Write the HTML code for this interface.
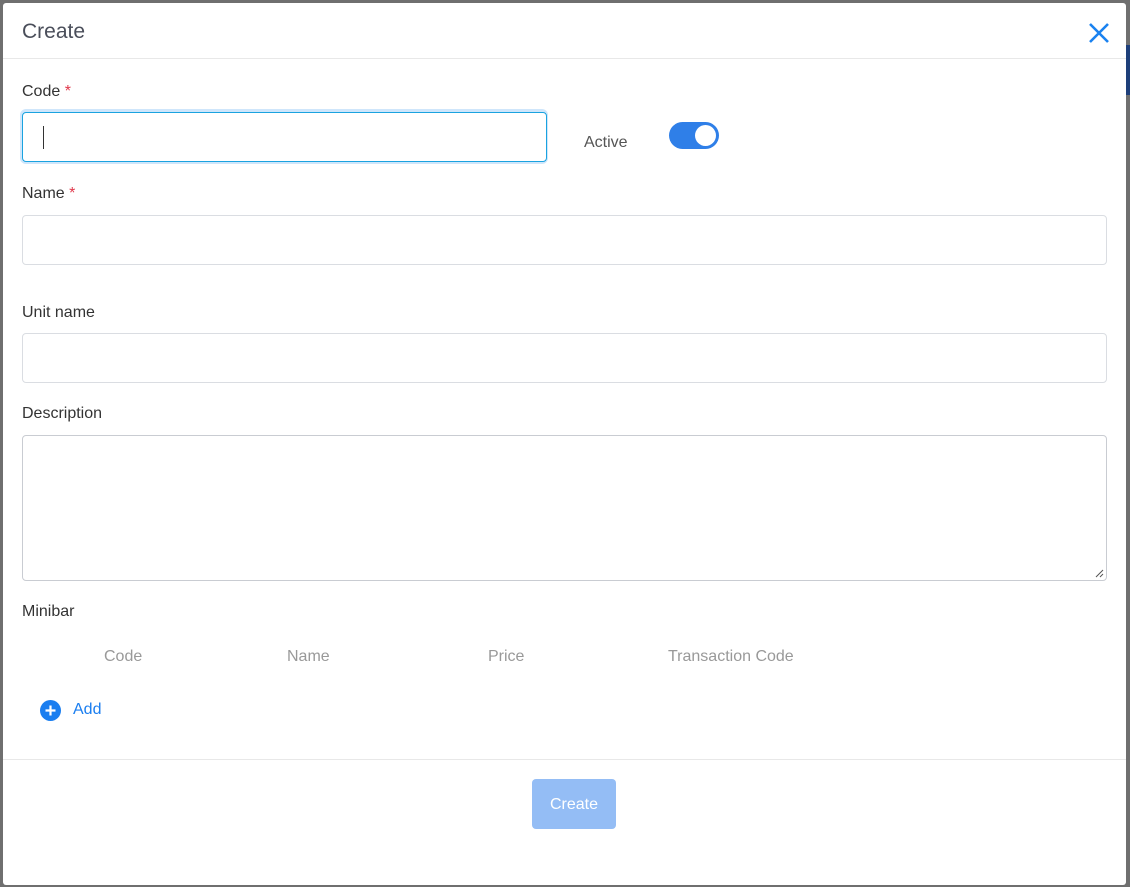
<!DOCTYPE html>
<html><head><style>
body{margin:0;width:1130px;height:887px;background:#6f6f6f;font-family:"Liberation Sans",sans-serif;position:relative;overflow:hidden}
.m{position:absolute;left:3px;top:3px;width:1123px;height:882px;background:#fff;border-radius:3px}
.a{position:absolute}
.lbl{font-size:16px;color:#333}
.st{color:#e0374a;font-size:16px}
.in{position:absolute;left:19px;width:1085px;height:48px;border:1px solid #dadde2;border-radius:4px;box-sizing:border-box}
.th{font-size:16px;color:#999}
</style></head><body>
<div class="a" style="right:0;top:45px;width:6px;height:50px;background:#1e3f7a"></div>
<div class="m">
<div class="a" style="left:19px;top:17px;font-size:21px;color:#4a4e5a">Create</div>
<svg class="a" style="left:1085px;top:19px" width="22" height="22" viewBox="0 0 22 22"><path d="M2 2L20 20M20 2L2 20" stroke="#1a82f0" stroke-width="2.6"/></svg>
<div class="a" style="left:0;top:55px;width:1123px;height:1px;background:#e8e8e8"></div>
<div class="a lbl" style="left:19px;top:80px">Code <span class="st">*</span></div>
<div class="a" style="left:17px;top:106px;width:528px;height:55px;border-radius:6px;background:#cfe6fb"></div>
<div class="a" style="left:19px;top:109px;width:525px;height:50px;border:1px solid #1aa3e0;border-radius:4px;box-sizing:border-box;background:#fff"></div>
<div class="a" style="left:40px;top:123px;width:1px;height:23px;background:#333"></div>
<div class="a" style="left:581px;top:131px;font-size:16px;color:#555">Active</div>
<div class="a" style="left:666px;top:119px;width:50px;height:27px;border-radius:14px;background:#2f7fe8"></div>
<div class="a" style="left:692px;top:122px;width:21px;height:21px;border-radius:50%;background:#fff"></div>
<div class="a lbl" style="left:19px;top:182px">Name <span class="st">*</span></div>
<div class="in" style="top:212px;height:50px"></div>
<div class="a lbl" style="left:19px;top:301px">Unit name</div>
<div class="in" style="top:330px;height:50px"></div>
<div class="a lbl" style="left:19px;top:402px">Description</div>
<div class="in" style="top:432px;height:146px;border-color:#c9ccd2"></div>
<svg class="a" style="left:1092px;top:566px" width="9" height="9"><path d="M1 8L8 1M5 8L8 5" stroke="#555" stroke-width="1"/></svg>
<div class="a lbl" style="left:19px;top:600px">Minibar</div>
<div class="a th" style="left:101px;top:645px">Code</div>
<div class="a th" style="left:284px;top:645px">Name</div>
<div class="a th" style="left:485px;top:645px">Price</div>
<div class="a th" style="left:665px;top:645px">Transaction Code</div>
<svg class="a" style="left:37px;top:697px" width="21" height="21" viewBox="0 0 21 21"><circle cx="10.5" cy="10.5" r="10.5" fill="#1a7ef0"/><path d="M10.5 5.5V15.5M5.5 10.5H15.5" stroke="#fff" stroke-width="2.2"/></svg>
<div class="a" style="left:70px;top:698px;font-size:16px;color:#1a7ef0">Add</div>
<div class="a" style="left:0;top:756px;width:1123px;height:1px;background:#e8e8e8"></div>
<div class="a" style="left:529px;top:776px;width:84px;height:50px;border-radius:4px;background:#94bdf5;color:#fff;font-size:16px;text-align:center;line-height:52px">Create</div>
</div>
</body></html>
